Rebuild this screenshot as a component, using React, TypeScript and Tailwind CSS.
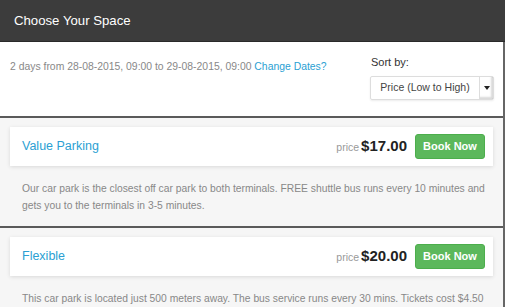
import React from 'react';

interface Space {
  name: string;
  price: string;
  desc: string;
}

const spaces: Space[] = [
  {
    name: 'Value Parking',
    price: '$17.00',
    desc: 'Our car park is the closest off car park to both terminals. FREE shuttle bus runs every 10 minutes and gets you to the terminals in 3-5 minutes.',
  },
  {
    name: 'Flexible',
    price: '$20.00',
    desc: 'This car park is located just 500 meters away. The bus service runs every 30 mins. Tickets cost $4.50 per person each way.',
  },
];

function SpaceRow({ space }: { space: Space }) {
  return (
    <div className="bg-[#f6f6f6] border-b-2 border-[#5a5a5a] px-[10px] pt-[9px] pb-[12px]">
      {/* card head */}
      <div className="bg-white h-[39px] flex items-center justify-between pl-[12px] pr-[8px] shadow-[0_1px_4px_rgba(0,0,0,0.12)]">
        <span className="text-[12.5px] text-[#2b9fd3]">{space.name}</span>
        <div className="flex items-center">
          <span className="text-[10.5px] text-[#999] mr-[2px] mt-[2px]">price</span>
          <span className="text-[15px] font-bold text-[#222]">{space.price}</span>
          <button className="ml-[8px] w-[70px] h-[25px] rounded-[3px] bg-[#5cb85c] border border-[#4cae4c] text-white text-[11px] font-bold">
            Book Now
          </button>
        </div>
      </div>
      <p className="mt-[14px] pl-[12px] pr-[2px] text-[10.3px] leading-[17px] text-[#888]">{space.desc}</p>
    </div>
  );
}

export default function App() {
  return (
    <div className="w-[505px] h-[307px] overflow-hidden bg-white font-['Liberation_Sans',Arial,sans-serif]">
      <div className="h-[42px] bg-[#3c3c3c] border-b border-[#2a2a2a] flex items-center px-[14px]">
        <h1 className="text-[13.2px] text-white">Choose Your Space</h1>
      </div>
      <div className="border-r-2 border-[#666]">
        <div className="h-[76px] border-b-2 border-[#5a5a5a] flex justify-between pl-[10px] pr-[9px]">
          <p className="mt-[17px] text-[10.4px] text-[#888]">
            2 days from 28-08-2015, 09:00 to 29-08-2015, 09:00{' '}
            <a className="text-[#2b9fd3]">Change Dates?</a>
          </p>
          <div className="mt-[12px] w-[124px]">
            <div className="text-[11px] text-[#333] pl-[1px]">Sort by:</div>
            <div className="mt-[5px] h-[24px] flex border border-[#ddd] rounded-[2px] shadow-[0_1px_2px_rgba(0,0,0,0.08)]">
              <span className="flex-1 flex items-center justify-center text-[10.5px] text-[#444]">Price (Low to High)</span>
              <span className="w-[14px] flex items-center justify-center border-l border-[#ddd] shadow-[inset_-2px_-2px_2px_rgba(0,0,0,0.15)]">
                <svg width="6" height="4" viewBox="0 0 6 4">
                  <path d="M0 0h6L3 4z" fill="#222" />
                </svg>
              </span>
            </div>
          </div>
        </div>
        {spaces.map((s) => (
          <SpaceRow key={s.name} space={s} />
        ))}
      </div>
    </div>
  );
}
